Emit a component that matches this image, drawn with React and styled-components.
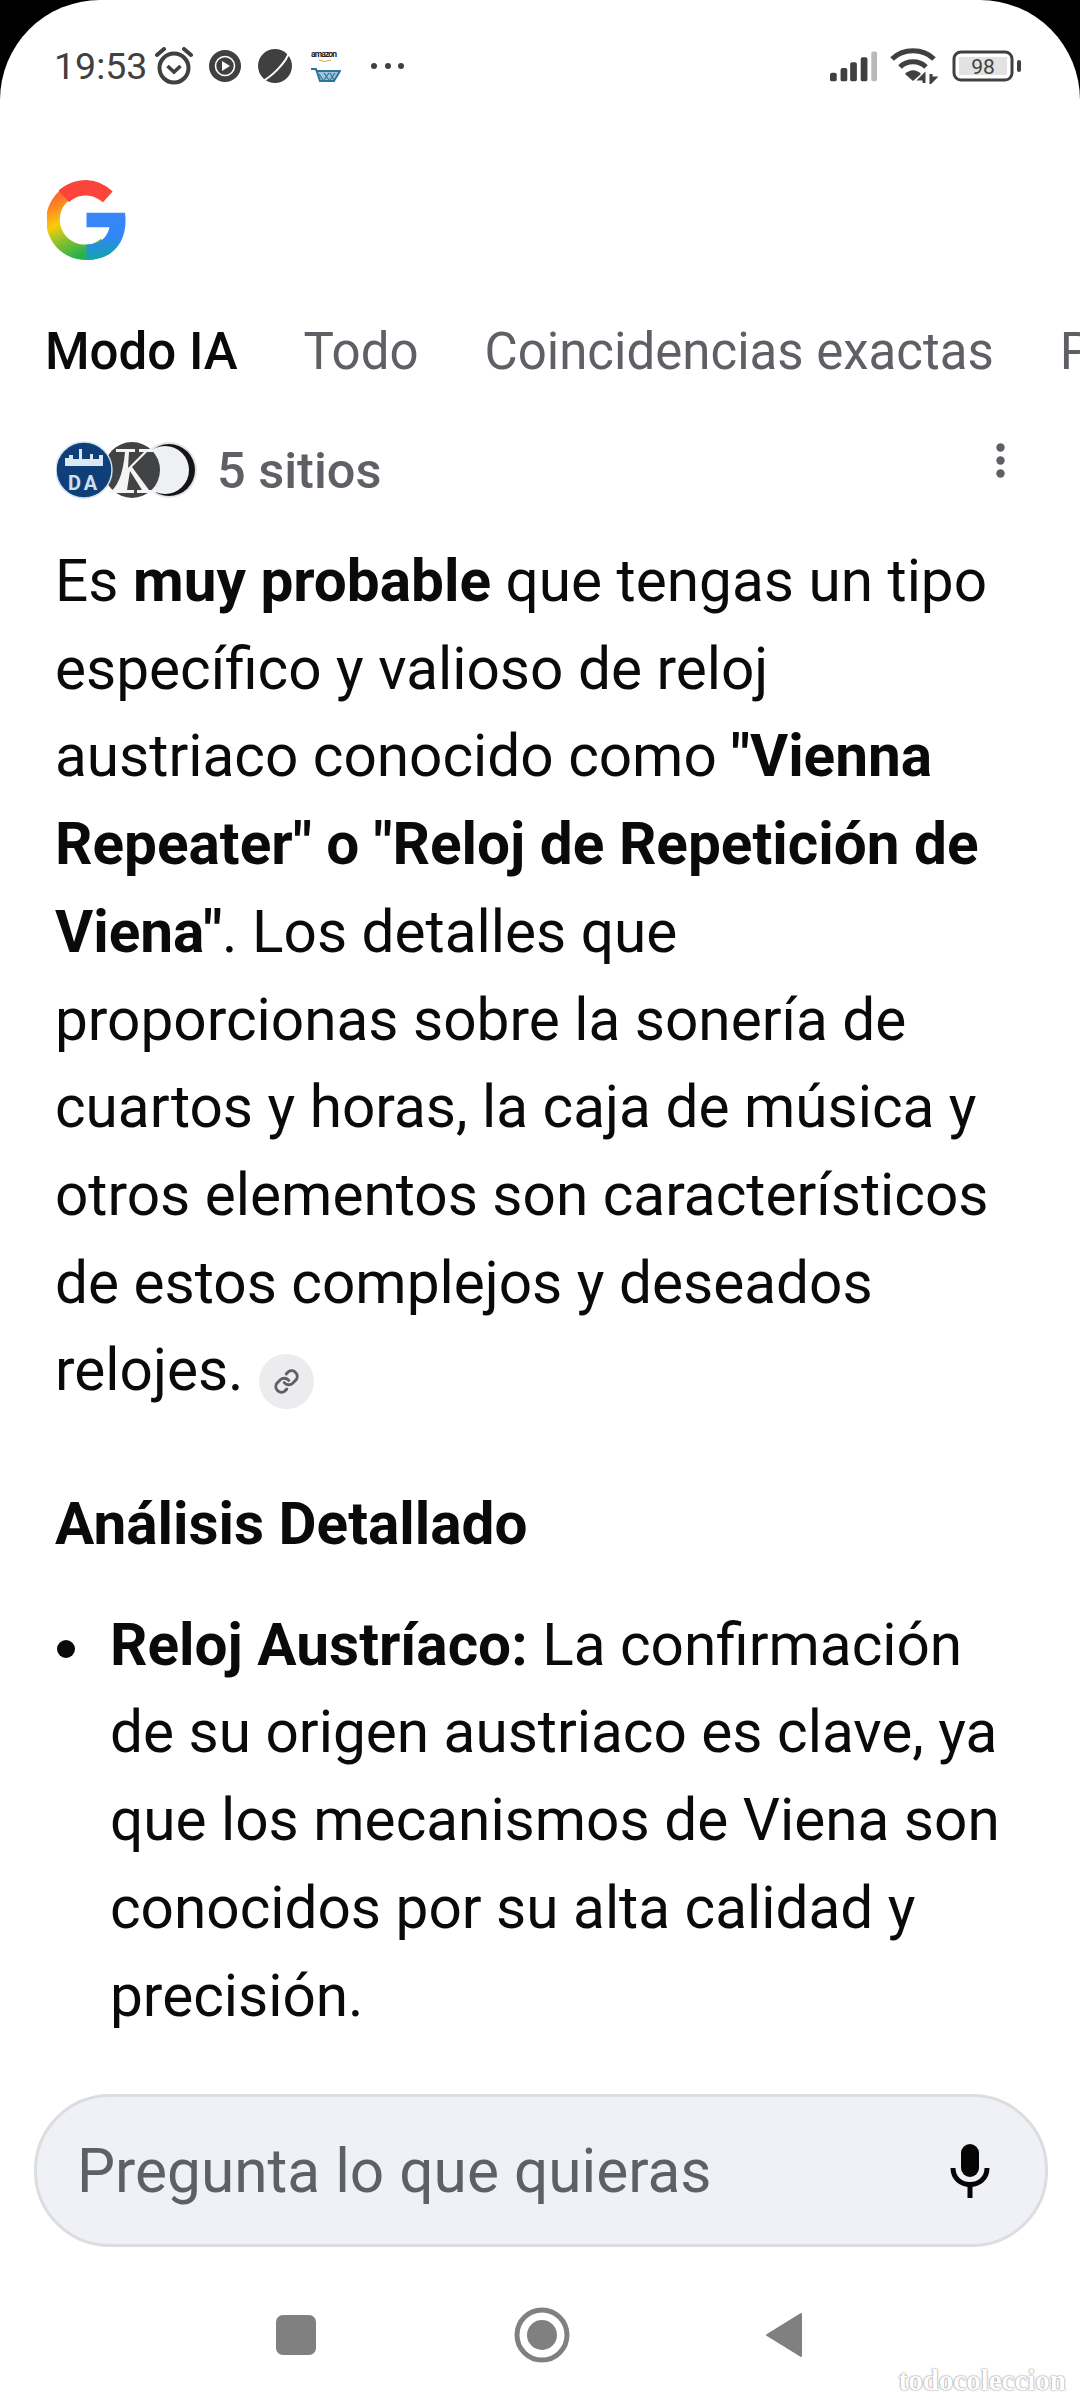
import React from "react";
import styled, { createGlobalStyle } from "styled-components";

const Global = createGlobalStyle`
  html, body { margin: 0; padding: 0; background: #000; }
  #root { width: 1080px; height: 2400px; }
`;
const Phone = styled.div`
  position: relative; width: 1080px; height: 2400px; background: #fff; overflow: hidden;
  border-radius: 100px 100px 0 0; display: flex; flex-direction: column;
  font-family: Roboto, "Noto Sans", sans-serif; color: #0b0b0c;
`;
const StatusBar = styled.div`
  height: 132px; flex: none; display: flex; align-items: center; justify-content: space-between;
  padding: 0 58px 0 54px; box-sizing: border-box; color: #404040;
`;
const StatusGroup = styled.div`display: flex; align-items: center;`;
const StatusIcon = styled.span`display: flex; margin-left: ${p => p.$ml || 0}px;`;
const Clock = styled.span`font-size: 37.5px; line-height: 44px;`;
const LogoRow = styled.div`flex: none; padding: 47px 0 0 47px; height: 81px;`;
const Tabs = styled.div`
  flex: none; display: flex; gap: 66px; padding: 59px 0 0 45px; white-space: nowrap; overflow: hidden;
  font-size: 51px; line-height: 66px; color: #5f6065;
`;
const Tab = styled.span`
  color: ${p => (p.$active ? "#0a0a0a" : "#5f6065")};
  font-weight: ${p => (p.$active ? 500 : 400)};
  flex: none;
`;
const SourcesRow = styled.div`
  flex: none; display: flex; align-items: center; padding: 55px 0 0 56px; height: 60px;
`;
const Favicons = styled.div`display: flex; align-items: center; width: 161px; flex: none;`;
const SitesLabel = styled.span`font-size: 50.5px; font-weight: 500; color: #5f6065;`;
const MoreButton = styled.div`margin-left: auto; margin-right: 75px; margin-top: -19px; display: flex;`;
const Article = styled.div`flex: 1; padding: 38px 60px 0 55px; font-size: 58.5px; line-height: 87.7px; color: #0a0a0b;`;
const Paragraph = styled.p`margin: 0;`;
const Chip = styled.span`
  display: inline-flex; align-items: center; justify-content: center; width: 55px; height: 55px;
  border-radius: 50%; background: #ececef; vertical-align: -5px; margin-left: 1px;
`;
const Heading = styled.h2`font-size: 58.5px; line-height: 87.7px; font-weight: 700; margin: 66px 0 33px;`;
const BulletList = styled.ul`margin: 0; padding: 0 0 0 55px; list-style: none;`;
const BulletItem = styled.li`
  position: relative;
  &::before { content: ""; position: absolute; left: -53px; top: 38px; width: 18px; height: 18px; border-radius: 50%; background: #0a0a0b; }
`;
const SearchBar = styled.div`
  position: absolute; left: 34px; top: 2094px; width: 1014px; height: 153px; box-sizing: border-box;
  border: 3px solid #dcdde1; border-radius: 76px; background: #f0f1f6; display: flex; align-items: center;
  padding: 0 55px 0 40px; justify-content: space-between;
`;
const Placeholder = styled.span`font-size: 60.4px; color: #5f6065; position: relative; top: 1px;`;
const NavBar = styled.div`
  position: absolute; left: 0; right: 0; top: 2308px; height: 54px; display: flex; align-items: center;
`;
const NavSlot = styled.div`position: absolute; left: ${p => p.$x}px; display: flex;`;
const Watermark = styled.span`
  position: absolute; right: 14px; bottom: 3px; font-size: 29px; font-family: "Liberation Serif", serif;
  color: #fff; text-shadow: 0 0 2px #8f8f8f, 0 0 1px #8f8f8f; font-weight: 700;
`;

const GoogleG = () => (
  <svg width="79" height="81" viewBox="0 0 82 84">
    <defs>
      <linearGradient id="gy" x1="0" y1="0.1" x2="0.35" y2="1">
        <stop offset="0" stopColor="#fb4a3e" /><stop offset="0.28" stopColor="#fb8c1f" /><stop offset="0.5" stopColor="#fbcb0c" />
        <stop offset="0.72" stopColor="#8ec22c" /><stop offset="1" stopColor="#2bb04f" />
      </linearGradient>
      <linearGradient id="gb" x1="0.2" y1="0" x2="0.3" y2="1">
        <stop offset="0" stopColor="#3a86f8" /><stop offset="0.55" stopColor="#3186f6" /><stop offset="1" stopColor="#10a5a4" />
      </linearGradient>
    </defs>
    <path d="M68 13 A41 41 0 1 0 41 84 C48 84 58 82 66 77 L56 62 C52 66 47 68 41 68 A26 26 0 1 1 58 24 Z" fill="url(#gy)" />
    <path d="M68 13 A41 41 0 0 0 41 1 C30 1 20 5 12 12 L23 24 C28 19 34 17 41 17 C47 17 53 20 58 24 Z" fill="#fb443c" />
    <path d="M41 35 H81 C82 44 82 54 77 64 C73 72 63 84 41 84 L41 68 C54 68 62 62 65 50 H41 Z" fill="url(#gb)" />
  </svg>
);

const AlarmIcon = () => (
  <svg width="40" height="38" viewBox="0 0 40 38" fill="none" stroke="#404040">
    <circle cx="20" cy="21" r="14.5" strokeWidth="4" />
    <path d="M3 8 L10 2 M37 8 L30 2" strokeWidth="4" strokeLinecap="round" />
    <path d="M13.5 19 L20 25 L26.5 19" strokeWidth="3.6" />
  </svg>
);
const PlayBadge = () => (
  <svg width="32" height="32" viewBox="0 0 32 32">
    <circle cx="16" cy="16" r="16" fill="#404040" />
    <circle cx="16" cy="16" r="9.5" fill="none" stroke="#fff" strokeWidth="1.6" />
    <path d="M13 11 L21 16 L13 21 Z" fill="#fff" />
  </svg>
);
const PlanetIcon = () => (
  <svg width="36" height="36" viewBox="0 0 36 36">
    <circle cx="18" cy="18" r="17" fill="#404040" />
    <path d="M2 35 C14 30 30 14 33 2" stroke="#fff" strokeWidth="2" fill="none" />
  </svg>
);
const AmazonIcon = () => (
  <svg width="30" height="36" viewBox="0 0 30 36">
    <text x="0" y="9" fontSize="8.5" fontWeight="700" fontFamily="Roboto" fill="#222" textLength="26">amazon</text>
    <path d="M8 12 Q14 15 20 12" stroke="#e8a33d" strokeWidth="1" fill="none" />
    <path d="M0 21 H5 L9 33 H23 L29 23 H5" stroke="#2f729e" strokeWidth="2" fill="#9fc3da" />
    <path d="M8 26 L12 32 M13 25 L18 32 M19 25 L23 32 M13 32 L18 25 M19 32 L24 25" stroke="#2f729e" strokeWidth="1.2" />
  </svg>
);
const DotsH = () => (
  <svg width="36" height="10" viewBox="0 0 36 10" fill="#404040">
    <circle cx="4" cy="5" r="3" /><circle cx="18" cy="5" r="3" /><circle cx="31" cy="5" r="3" />
  </svg>
);
const Signal = () => (
  <svg width="48" height="32" viewBox="0 0 50 32">
    <rect x="0" y="23" width="7" height="9" rx="2" fill="#404040" />
    <rect x="11" y="18" width="7" height="14" rx="2" fill="#404040" />
    <rect x="21" y="12" width="7" height="20" rx="2" fill="#404040" />
    <rect x="32" y="7" width="7" height="25" rx="2" fill="#404040" />
    <rect x="43" y="1" width="6" height="31" rx="2" fill="#b9b9b9" />
  </svg>
);
const Wifi = () => (
  <svg width="48" height="36" viewBox="0 0 48 36" fill="none" stroke="#404040" strokeWidth="5">
    <path d="M2 11 C13 0 33 0 44 11" />
    <path d="M10 19 C17 12 29 12 36 19" />
    <path d="M23 33 L15 26 C20 21 26 21 31 26 Z" fill="#404040" stroke="none" />
    <path d="M34 35 V27 L30 31 H34 M41 26 V34 L45 30 H41" strokeWidth="3" />
  </svg>
);
const Battery = () => (
  <svg width="70" height="32" viewBox="0 0 70 32">
    <rect x="2" y="2" width="58" height="28" rx="7" fill="#fff" stroke="#404040" strokeWidth="3" />
    <rect x="7" y="7" width="48" height="18" fill="#e2e2e2" />
    <rect x="65" y="10" width="4" height="12" rx="2" fill="#404040" />
    <text x="31" y="24" textAnchor="middle" fontFamily="Roboto" fontSize="21" fill="#404040">98</text>
  </svg>
);
const FaviconStack = () => (
  <svg width="144" height="60" viewBox="0 0 144 60">
    <defs><clipPath id="c3"><circle cx="113" cy="30" r="27" /></clipPath></defs>
    <circle cx="113" cy="30" r="28" fill="#e2e3e6" />
    <circle cx="113" cy="30" r="26" fill="#151515" />
    <circle cx="109" cy="30" r="24" fill="#eef0f4" clipPath="url(#c3)" />
    <circle cx="76" cy="30" r="28" fill="#424345" />
    <path d="M52 53 Q66 46 69 12 H60 V9 H79 V12 H73 L72 28 L88 12 H83 V9 H97 V12 H91 L76 27 L93 50 H100 V53 H81 V50 H86 L74 31 L71 50 H78 V53 Z" fill="#f4f4f4" />
    <circle cx="28" cy="30" r="28" fill="#0f3f79" stroke="#cfe0ee" strokeWidth="1.5" />
    <path d="M9 26 V18 H13 V15 H17 V19 H23 V9 H26 V19 H34 V14 H37 V19 H43 V15 H47 V26 Z" fill="#dbe8f2" />
    <text x="28" y="50" textAnchor="middle" fontFamily="Roboto" fontWeight="700" fontSize="20" letterSpacing="3" fill="#cfe0ee">DA</text>
  </svg>
);
const KebabIcon = () => (
  <svg width="9" height="35" viewBox="0 0 9 35" fill="#5f6065">
    <circle cx="4.5" cy="4.5" r="4.2" /><circle cx="4.5" cy="17.5" r="4.2" /><circle cx="4.5" cy="30.5" r="4.2" />
  </svg>
);
const LinkIcon = () => (
  <svg width="27" height="27" viewBox="0 0 24 24" fill="none" stroke="#5f6065" strokeWidth="2.6" strokeLinecap="round" strokeLinejoin="round">
    <path d="M10 13a5 5 0 0 0 7.5.5l3-3a5 5 0 0 0-7-7l-1.7 1.7" />
    <path d="M14 11a5 5 0 0 0-7.5-.5l-3 3a5 5 0 0 0 7 7l1.7-1.7" />
  </svg>
);
const MicIcon = () => (
  <svg width="40" height="54" viewBox="0 0 40 54" fill="none">
    <rect x="11" y="0" width="18" height="33" rx="9" fill="#050505" />
    <path d="M3 24 C3 46 37 46 37 24" stroke="#050505" strokeWidth="5" />
    <rect x="17.5" y="38" width="5" height="16" fill="#050505" />
  </svg>
);
const NavSquare = () => <svg width="40" height="40" viewBox="0 0 40 40"><rect width="40" height="40" rx="7" fill="#808080" /></svg>;
const NavCircle = () => (
  <svg width="56" height="56" viewBox="0 0 56 56">
    <circle cx="28" cy="28" r="25" fill="none" stroke="#808080" strokeWidth="5" />
    <circle cx="28" cy="28" r="15" fill="#808080" />
  </svg>
);
const NavBack = () => <svg width="38" height="46" viewBox="0 0 38 46"><path d="M36 2 V44 L2 23 Z" fill="#808080" stroke="#808080" strokeLinejoin="round" strokeWidth="2" /></svg>;

export default function App() {
  return (
    <Phone>
      <Global />
      <StatusBar>
        <StatusGroup>
          <Clock>19:53</Clock>
          <StatusIcon $ml={7}><AlarmIcon /></StatusIcon>
          <StatusIcon $ml={15}><PlayBadge /></StatusIcon>
          <StatusIcon $ml={16}><PlanetIcon /></StatusIcon>
          <StatusIcon $ml={18}><AmazonIcon /></StatusIcon>
          <StatusIcon $ml={29}><DotsH /></StatusIcon>
        </StatusGroup>
        <StatusGroup>
          <Signal />
          <StatusIcon $ml={12}><Wifi /></StatusIcon>
          <StatusIcon $ml={14}><Battery /></StatusIcon>
        </StatusGroup>
      </StatusBar>
      <LogoRow><GoogleG /></LogoRow>
      <Tabs>
        <Tab $active>Modo IA</Tab>
        <Tab>Todo</Tab>
        <Tab>Coincidencias exactas</Tab>
        <Tab>Productos</Tab>
      </Tabs>
      <SourcesRow>
        <Favicons><FaviconStack /></Favicons>
        <SitesLabel>5 sitios</SitesLabel>
        <MoreButton><KebabIcon /></MoreButton>
      </SourcesRow>
      <Article>
        <Paragraph>
          Es <strong>muy probable</strong> que tengas un tipo específico y valioso de reloj austriaco conocido como{" "}
          <strong>"Vienna Repeater" o "Reloj de Repetición de Viena"</strong>. Los detalles que
          proporcionas sobre la sonería de cuartos y horas, la caja de música y otros elementos son característicos de
          estos complejos y deseados relojes. <Chip><LinkIcon /></Chip>
        </Paragraph>
        <Heading>Análisis Detallado</Heading>
        <BulletList>
          <BulletItem>
            <strong>Reloj Austríaco:</strong> La confirmación de su origen austriaco es clave, ya que los mecanismos de
            Viena son conocidos por su alta calidad y precisión.
          </BulletItem>
        </BulletList>
      </Article>
      <SearchBar>
        <Placeholder>Pregunta lo que quieras</Placeholder>
        <MicIcon />
      </SearchBar>
      <NavBar>
        <NavSlot $x={276}><NavSquare /></NavSlot>
        <NavSlot $x={514}><NavCircle /></NavSlot>
        <NavSlot $x={765}><NavBack /></NavSlot>
      </NavBar>
      <Watermark>todocoleccion</Watermark>
    </Phone>
  );
}
